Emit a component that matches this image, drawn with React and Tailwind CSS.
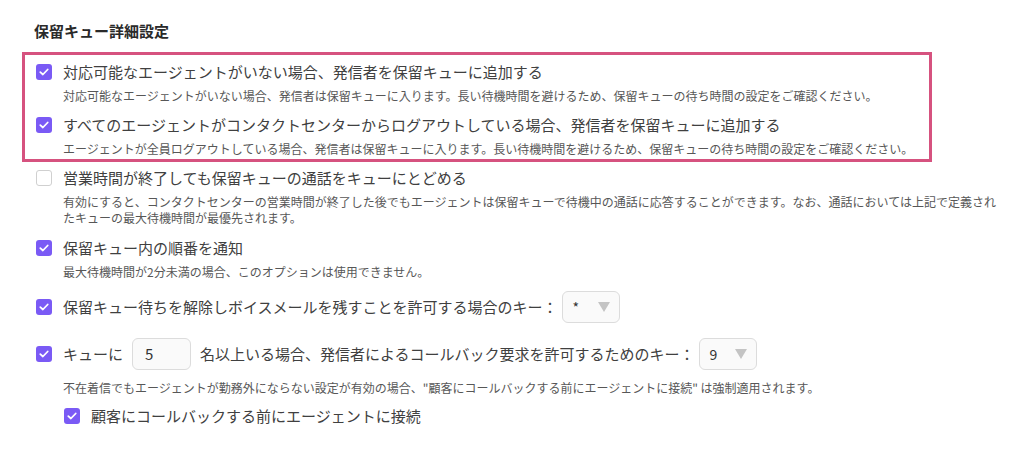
import React from "react";

const font = { fontFamily: '"Noto Sans CJK JP", "Noto Sans", sans-serif' };

function Box({ checked }) {
  if (!checked) {
    return (
      <span className="inline-block w-[16px] h-[16px] rounded-[3px] border border-[#d0d0d0] bg-white shrink-0" />
    );
  }
  return (
    <span className="inline-flex items-center justify-center w-[16px] h-[16px] rounded-[3px] bg-[#7a5af5] shrink-0">
      <svg width="10" height="8" viewBox="0 0 10 8" fill="none">
        <path d="M1.3 4.1 L3.9 6.5 L8.7 1.5" stroke="white" strokeWidth="1.8" strokeLinecap="round" strokeLinejoin="round" />
      </svg>
    </span>
  );
}

function Item({ checked, label, desc, className = "" }) {
  return (
    <div className={"flex " + className}>
      <div className="h-[20px] flex items-center">
        <Box checked={checked} />
      </div>
      <div className="ml-[11px]">
        <div className="text-[15px] leading-[20px] text-[#404040]">{label}</div>
        {desc && (
          <div className="mt-[6px] text-[12px] leading-[16px] text-[#575757]">{desc}</div>
        )}
      </div>
    </div>
  );
}

function Select({ value }) {
  return (
    <div className="w-[58px] h-[32px] rounded-[6px] border border-[#dcdcdc] bg-[#fafafa] flex items-center pl-[10px] pr-[9px] justify-between">
      <span className="text-[14px] text-[#333]">{value}</span>
      <svg width="12" height="10" viewBox="0 0 12 10">
        <path d="M0 0 H12 L6 10 Z" fill="#c4c4c4" />
      </svg>
    </div>
  );
}

export default function App() {
  return (
    <div style={font} className="w-[1026px] h-[466px] bg-white px-[22px] pt-[20px]">
      <div className="pl-[12px] text-[15px] leading-[22px] font-semibold text-[#2a2a2a]">保留キュー詳細設定</div>

      <div className="mt-[10px] w-[910px] border-[3px] border-[#d6527f] px-[11px] pt-[7px] pb-[2px]">
        <Item
          checked
          label="対応可能なエージェントがいない場合、発信者を保留キューに追加する"
          desc="対応可能なエージェントがいない場合、発信者は保留キューに入ります。長い待機時間を避けるため、保留キューの待ち時間の設定をご確認ください。"
        />
        <Item
          checked
          className="mt-[11px]"
          label="すべてのエージェントがコンタクトセンターからログアウトしている場合、発信者を保留キューに追加する"
          desc="エージェントが全員ログアウトしている場合、発信者は保留キューに入ります。長い待機時間を避けるため、保留キューの待ち時間の設定をご確認ください。"
        />
      </div>

      <div className="pl-[14px]">
        <Item
          checked={false}
          className="mt-[6px]"
          label="営業時間が終了しても保留キューの通話をキューにとどめる"
          desc={
            <>
              有効にすると、コンタクトセンターの営業時間が終了した後でもエージェントは保留キューで待機中の通話に応答することができます。なお、通話においては上記で定義され
              <br />
              たキューの最大待機時間が最優先されます。
            </>
          }
        />
        <Item
          checked
          className="mt-[12px]"
          label="保留キュー内の順番を通知"
          desc="最大待機時間が2分未満の場合、このオプションは使用できません。"
        />

        <div className="mt-[11px] flex items-center h-[32px]">
          <Box checked />
          <span className="ml-[11px] text-[15px] text-[#404040]">保留キュー待ちを解除しボイスメールを残すことを許可する場合のキー：</span>
          <div className="ml-[4px]">
            <Select value="*" />
          </div>
        </div>

        <div className="mt-[15px] flex items-center h-[32px]">
          <Box checked />
          <span className="ml-[11px] text-[15px] text-[#404040]">キューに</span>
          <div className="ml-[9px] w-[59px] h-[32px] rounded-[6px] border border-[#dcdcdc] bg-[#fafafa] flex items-center pl-[12px] text-[15px] text-[#333]">
            5
          </div>
          <span className="ml-[9px] text-[15px] text-[#404040]">名以上いる場合、発信者によるコールバック要求を許可するためのキー：</span>
          <div className="ml-[4px]">
            <Select value="9" />
          </div>
        </div>

        <div className="mt-[10px] pl-[27px] text-[12px] leading-[16px] text-[#575757]">
          不在着信でもエージェントが勤務外にならない設定が有効の場合、"顧客にコールバックする前にエージェントに接続" は強制適用されます。
        </div>

        <div className="mt-[10px] pl-[28px]">
          <Item checked label="顧客にコールバックする前にエージェントに接続" />
        </div>
      </div>
    </div>
  );
}
